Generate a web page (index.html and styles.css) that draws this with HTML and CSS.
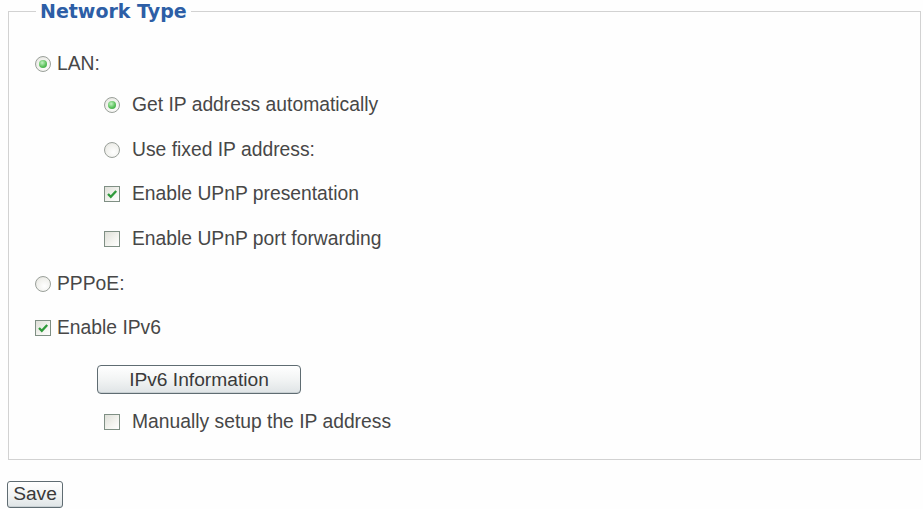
FILE: index.html
```html
<!DOCTYPE html>
<html>
<head>
<meta charset="utf-8">
<link rel="stylesheet" href="styles.css">
</head>
<body>
<fieldset class="box">
  <legend class="title">Network Type</legend>
  <div class="row first lvl1"><span class="radio on"></span><span class="lbl">LAN:</span></div>
  <div class="row lvl2"><span class="radio on"></span><span class="lbl">Get IP address automatically</span></div>
  <div class="row lvl2"><span class="radio"></span><span class="lbl">Use fixed IP address:</span></div>
  <div class="row lvl2"><span class="check on"><svg viewBox="0 0 16 16" width="16" height="16"><polyline points="4,8 6.8,10.8 12.2,5" fill="none" stroke="#2f9a3a" stroke-width="2.3"/></svg></span><span class="lbl">Enable UPnP presentation</span></div>
  <div class="row lvl2"><span class="check"></span><span class="lbl">Enable UPnP port forwarding</span></div>
  <div class="row lvl1"><span class="radio"></span><span class="lbl">PPPoE:</span></div>
  <div class="row lvl1"><span class="check on"><svg viewBox="0 0 16 16" width="16" height="16"><polyline points="4,8 6.8,10.8 12.2,5" fill="none" stroke="#2f9a3a" stroke-width="2.3"/></svg></span><span class="lbl">Enable IPv6</span></div>
  <div class="btnrow"><button class="btn wide">IPv6 Information</button></div>
  <div class="row lvl2"><span class="check"></span><span class="lbl">Manually setup the IP address</span></div>
</fieldset>
<div class="actions"><button class="btn save">Save</button></div>
</body>
</html>
```
FILE: styles.css
```css
html, body {
  margin: 0;
  padding: 0;
  background: #fefefe;
}
body {
  padding-top: 1px;
  font-family: "Liberation Sans", Arial, sans-serif;
  font-size: 19.3px;
  color: #474747;
}
.box {
  margin: 0 0 0 8px;
  width: 913px;
  box-sizing: border-box;
  border: 1px solid #d2d2d2;
  padding: 22.5px 0 14px 0;
}
.title {
  margin-left: 27px;
  padding: 0 4px;
  font-family: "DejaVu Sans", Verdana, sans-serif;
  font-weight: bold;
  font-size: 19px;
  color: #2d5ea6;
  line-height: 21px;
}
.row {
  height: 44.7px;
  display: flex;
  align-items: center;
}
.row.first { height: 38px; }
.lvl1 { padding-left: 26px; }
.lvl2 { padding-left: 95px; }
.lvl1 .lbl { margin-left: 6px; }
.lvl2 .lbl { margin-left: 12px; }
.radio {
  width: 14px;
  height: 14px;
  border: 1px solid #9aa09a;
  border-radius: 50%;
  background: radial-gradient(circle at 60% 65%, #ffffff 0%, #f0f0ec 60%, #dcdcd6 100%);
  display: flex;
  align-items: center;
  justify-content: center;
  flex: none;
}
.radio.on::after {
  content: "";
  width: 8px;
  height: 8px;
  border-radius: 50%;
  background: radial-gradient(circle at 40% 35%, #c4f2c4 0%, #5cc25c 55%, #2f9a3a 100%);
}
.check {
  width: 14px;
  height: 14px;
  border: 1px solid #7f8f84;
  background: linear-gradient(135deg, #dedfd8 0%, #f4f4f0 60%, #ffffff 100%);
  flex: none;
  position: relative;
}
.check svg {
  position: absolute;
  left: -1px;
  top: -1px;
}
.btnrow {
  height: 49.5px;
  padding-left: 88px;
  display: flex;
  align-items: flex-start;
}
.btn {
  font-family: "Liberation Sans", Arial, sans-serif;
  font-size: 19.2px;
  color: #3a3a3a;
  border: 1px solid #5f6c72;
  border-radius: 4px;
  background: linear-gradient(#ffffff 0%, #f2f4f4 50%, #dfe4e6 100%);
  box-shadow: inset 0 -1px 0 #c9d0d3;
  padding: 0;
  margin: 0;
}
.wide {
  margin-top: 14.5px;
  width: 204px;
  height: 29px;
}
.actions {
  padding: 21px 0 0 7px;
}
.save {
  width: 56px;
  height: 27px;
  border-radius: 3px;
}
```
